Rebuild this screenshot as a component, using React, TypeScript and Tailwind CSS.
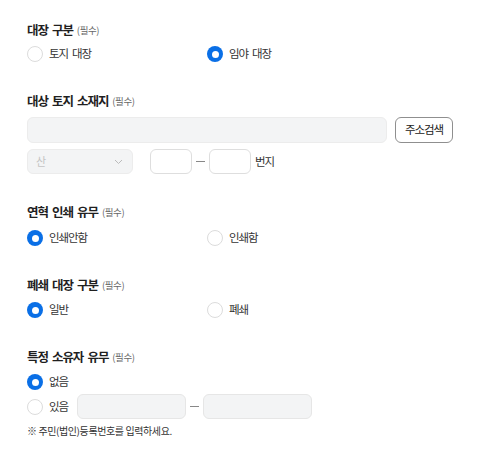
import React from "react";

const font = { fontFamily: '"Noto Sans CJK KR", "Noto Sans", sans-serif' };

function Radio({ checked, label }: { checked?: boolean; label: string }) {
  return (
    <label className="flex items-center gap-[6px] h-[20px]">
      {checked ? (
        <span className="w-[16px] h-[16px] rounded-full bg-[#0a6fe6] flex items-center justify-center">
          <span className="w-[7px] h-[7px] rounded-full bg-white" />
        </span>
      ) : (
        <span className="w-[16px] h-[16px] rounded-full border border-[#dcdcdc] bg-white" />
      )}
      <span className="text-[11.5px] text-[#333] tracking-[-1.1px] [word-spacing:2.5px]">{label}</span>
    </label>
  );
}

function Heading({ title }: { title: string }) {
  return (
    <div className="h-[20px] flex items-center gap-[4px]">
      <span className="text-[12.5px] font-bold text-[#1f1f1f] tracking-[-1.1px] [word-spacing:2.5px]">{title}</span>
      <span className="text-[9.5px] text-[#666] tracking-[-0.4px]">(필수)</span>
    </div>
  );
}

function RadioPair({ a, b, first }: { a: string; b: string; first: boolean }) {
  return (
    <div className="grid grid-cols-[180px_1fr]">
      <Radio checked={first} label={a} />
      <Radio checked={!first} label={b} />
    </div>
  );
}

export default function App() {
  return (
    <div className="w-[500px] h-[456px] bg-white pl-[27px] pt-[20px]" style={font}>
      {/* 대장 구분 */}
      <Heading title="대장 구분" />
      <div className="mt-[4px]">
        <RadioPair a="토지 대장" b="임야 대장" first={false} />
      </div>

      {/* 대상 토지 소재지 */}
      <div className="mt-[27px]">
        <Heading title="대상 토지 소재지" />
      </div>
      <div className="mt-[6px] flex items-center gap-[8px]">
        <div className="w-[360px] h-[26px] rounded-[6px] bg-[#f3f4f5] border border-[#ececec]" />
        <button className="w-[58px] h-[26px] rounded-[6px] border border-[#8f8f8f] bg-white text-[11.5px] text-[#222] tracking-[-1.1px]">
          주소검색
        </button>
      </div>
      <div className="mt-[6px] flex items-center">
        <div className="w-[106px] h-[25px] rounded-[6px] bg-[#f3f4f5] border border-[#ececec] flex items-center justify-between pl-[8px] pr-[9px]">
          <span className="text-[11px] text-[#c4c4c4]">산</span>
          <svg width="9" height="6" viewBox="0 0 9 6" fill="none">
            <path d="M1 1l3.5 3.5L8 1" stroke="#bbb" strokeWidth="1" />
          </svg>
        </div>
        <div className="ml-[17px] w-[42px] h-[25px] rounded-[6px] border border-[#dedede] bg-white" />
        <span className="w-[17px] flex justify-center">
          <span className="w-[9px] h-px bg-[#888]" />
        </span>
        <div className="w-[42px] h-[25px] rounded-[6px] border border-[#dedede] bg-white" />
        <span className="ml-[4px] text-[11.5px] text-[#333] tracking-[-1.1px]">번지</span>
      </div>

      {/* 연혁 인쇄 유무 */}
      <div className="mt-[28px]">
        <Heading title="연혁 인쇄 유무" />
      </div>
      <div className="mt-[6px]">
        <RadioPair a="인쇄안함" b="인쇄함" first />
      </div>

      {/* 폐쇄 대장 구분 */}
      <div className="mt-[27px]">
        <Heading title="폐쇄 대장 구분" />
      </div>
      <div className="mt-[5px]">
        <RadioPair a="일반" b="폐쇄" first />
      </div>

      {/* 특정 소유자 유무 */}
      <div className="mt-[27px]">
        <Heading title="특정 소유자 유무" />
      </div>
      <div className="mt-[5px]">
        <Radio checked label="없음" />
      </div>
      <div className="mt-[2px] flex items-center">
        <Radio label="있음" />
        <div className="ml-[9px] w-[109px] h-[25px] rounded-[6px] bg-[#f3f4f5] border border-[#e6e6e6]" />
        <span className="w-[17px] flex justify-center">
          <span className="w-[9px] h-px bg-[#888]" />
        </span>
        <div className="w-[109px] h-[25px] rounded-[6px] bg-[#f3f4f5] border border-[#e6e6e6]" />
      </div>
      <p className="mt-[4px] text-[10px] text-[#333] tracking-[-0.4px]">※ 주민(법인)등록번호를 입력하세요.</p>
    </div>
  );
}
